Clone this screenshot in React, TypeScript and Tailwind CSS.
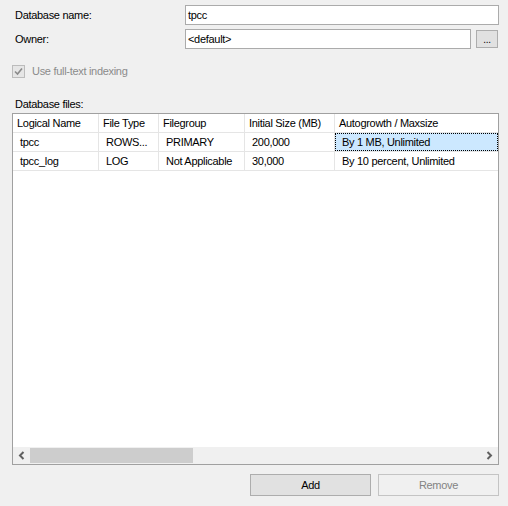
const font = { fontFamily: '"Liberation Sans", Arial, sans-serif' };

type FileRow = {
  name: string;
  type: string;
  group: string;
  size: string;
  growth: string;
};

const rows: FileRow[] = [
  { name: "tpcc", type: "ROWS...", group: "PRIMARY", size: "200,000", growth: "By 1 MB, Unlimited" },
  { name: "tpcc_log", type: "LOG", group: "Not Applicable", size: "30,000", growth: "By 10 percent, Unlimited" },
];

const cols = ["w-[86px]", "w-[60px]", "w-[86px]", "w-[90px]", "flex-1"];
const headers = ["Logical Name", "File Type", "Filegroup", "Initial Size (MB)", "Autogrowth / Maxsize"];

function Chevron({ dir }: { dir: "left" | "right" }) {
  return (
    <svg width="7" height="9" viewBox="0 0 7 9">
      <path
        d={dir === "left" ? "M5.5 1 L2 4.5 L5.5 8" : "M1.5 1 L5 4.5 L1.5 8"}
        fill="none"
        stroke="#606060"
        strokeWidth="2"
      />
    </svg>
  );
}

export default function App() {
  return (
    <div
      className="flex h-[506px] w-[508px] flex-col bg-[#f0f0f0] text-[11px] tracking-[-0.3px] text-black"
      style={font}
    >
      <div className="mt-[5px] flex h-[20px] items-center">
        <span className="ml-[15px] w-[170px]">Database name:</span>
        <div className="flex h-[20px] w-[314px] items-center border border-[#ababab] bg-white pl-[2px]">
          tpcc
        </div>
      </div>

      <div className="mt-[4px] flex h-[20px] items-center">
        <span className="ml-[15px] w-[170px]">Owner:</span>
        <div className="flex h-[20px] w-[286px] items-center border border-[#ababab] bg-white pl-[2px]">
          &lt;default&gt;
        </div>
        <button className="ml-[5px] flex h-[18px] w-[22px] items-end justify-center border border-[#adadad] bg-[#e1e1e1] pb-[2px] text-[10px] leading-none">
          ...
        </button>
      </div>

      <label className="mt-[15px] flex h-[14px] items-center text-[#8b8b8b]">
        <span className="ml-[12px] flex h-[13px] w-[13px] items-center justify-center border border-[#bcbcbc] bg-[#e6e6e6]">
          <svg width="9" height="9" viewBox="0 0 9 9">
            <path d="M1 4.5 L3.5 7 L8 1.5" fill="none" stroke="#8b8b8b" strokeWidth="1.6" />
          </svg>
        </span>
        <span className="ml-[7px]">Use full-text indexing</span>
      </label>

      <div className="ml-[15px] mt-[19px] leading-[14px]">Database files:</div>

      <div className="ml-[12px] mt-[2px] flex h-[352px] w-[487px] flex-col border border-[#a0a0a0] bg-white">
        <div className="flex h-[19px] border-b border-[#e5e5e5]">
          {headers.map((h, i) => (
            <div
              key={h}
              className={`${cols[i]} flex items-center border-r border-[#e5e5e5] pl-[4px] last:border-r-0`}
            >
              {h}
            </div>
          ))}
        </div>
        {rows.map((r, ri) => {
          const cells = [r.name, r.type, r.group, r.size, r.growth];
          return (
            <div key={r.name} className="flex h-[19px] border-b border-[#e5e5e5]">
              {cells.map((c, i) => {
                const selected = ri === 0 && i === 4;
                return (
                  <div
                    key={i}
                    className={
                      selected
                        ? `${cols[i]} flex items-center border border-dotted border-black bg-[#cce8ff] pl-[6px]`
                        : `${cols[i]} flex items-center border-r border-[#e5e5e5] pl-[7px] last:border-r-0`
                    }
                  >
                    {c}
                  </div>
                );
              })}
            </div>
          );
        })}
        <div className="flex-1" />
        <div className="flex h-[17px] items-center bg-[#f0f0f0]">
          <div className="flex w-[17px] items-center justify-center">
            <Chevron dir="left" />
          </div>
          <div className="h-[15px] w-[163px] bg-[#cdcdcd]" />
          <div className="flex-1" />
          <div className="flex w-[17px] items-center justify-center">
            <Chevron dir="right" />
          </div>
        </div>
      </div>

      <div className="ml-[250px] mt-[9px] flex gap-[7px]">
        <button className="h-[22px] w-[121px] border border-[#adadad] bg-[#e1e1e1]">Add</button>
        <button className="h-[22px] w-[121px] border border-[#c4c4c4] bg-[#f0f0f0] text-[#838383]">
          Remove
        </button>
      </div>
    </div>
  );
}
